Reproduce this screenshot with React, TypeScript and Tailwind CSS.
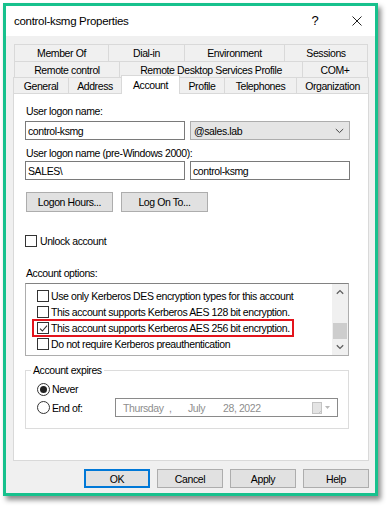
import React from "react";

type Tab = { label: string; w: string; last?: boolean; active?: boolean; noLeft?: boolean };

const backRow: Tab[] = [
  { label: "Member Of", w: "w-[94px]" },
  { label: "Dial-in", w: "w-[76px]" },
  { label: "Environment", w: "w-[100px]" },
  { label: "Sessions", w: "w-[84px]", last: true },
];

const midRow: Tab[] = [
  { label: "Remote control", w: "w-[105px]" },
  { label: "Remote Desktop Services Profile", w: "w-[183px]" },
  { label: "COM+", w: "w-[66px]", last: true },
];

const frontRow: Tab[] = [
  { label: "General", w: "w-[55px]" },
  { label: "Address", w: "w-[53px]" },
  { label: "Account", w: "w-[59px]", active: true },
  { label: "Profile", w: "w-[44px]", noLeft: true },
  { label: "Telephones", w: "w-[72px]" },
  { label: "Organization", w: "w-[73px]", last: true },
];

const options = [
  { text: "Use only Kerberos DES encryption types for this account", checked: false },
  { text: "This account supports Kerberos AES 128 bit encryption.", checked: false },
  { text: "This account supports Kerberos AES 256 bit encryption.", checked: true },
  { text: "Do not require Kerberos preauthentication", checked: false },
];

function Checkbox({ checked = false }: { checked?: boolean }) {
  return (
    <span className="flex h-[12px] w-[12px] shrink-0 items-center justify-center border border-[#333333] bg-white">
      {checked && (
        <svg width="9" height="9" viewBox="0 0 9 9">
          <path d="M1 4.6 L3.4 7 L8 1.6" fill="none" stroke="#333333" strokeWidth="1.1" />
        </svg>
      )}
    </span>
  );
}

function Radio({ on = false }: { on?: boolean }) {
  return (
    <span className="flex h-[13px] w-[13px] shrink-0 items-center justify-center rounded-full border border-[#333333] bg-white">
      {on && <span className="h-[7px] w-[7px] rounded-full bg-[#222222]" />}
    </span>
  );
}

function TabRow({ tabs, front = false }: { tabs: Tab[]; front?: boolean }) {
  return (
    <div className={front ? "ml-[7px] flex h-[16px] items-end" : "ml-[8px] flex"}>
      {tabs.map((t) => (
        <div
          key={t.label}
          className={[
            t.w,
            "flex items-center justify-center border-t border-[#d9d9d9] whitespace-nowrap",
            t.noLeft ? "" : "border-l",
            t.last || t.active ? "border-r" : "",
            t.active ? "relative z-10 -mb-px h-[19px] bg-white" : "h-[16px]",
          ].join(" ")}
        >
          {t.label}
        </div>
      ))}
    </div>
  );
}

function ChevronDown() {
  return (
    <svg width="9" height="6" viewBox="0 0 9 6">
      <path d="M0.8 1 L4.5 4.6 L8.2 1" fill="none" stroke="#444444" strokeWidth="1" />
    </svg>
  );
}

function ScrollBar() {
  return (
    <div className="flex w-[16px] flex-col bg-[#f0f0f0]">
      <div className="flex h-[17px] items-center justify-center">
        <svg width="8" height="6" viewBox="0 0 8 6">
          <path d="M0.8 4.8 L4 1.6 L7.2 4.8" fill="none" stroke="#5f5f5f" strokeWidth="1.3" />
        </svg>
      </div>
      <div className="flex-1">
        <div className="mx-[1px] mt-[22px] h-[16px] bg-[#cdcdcd]" />
      </div>
      <div className="flex h-[17px] items-center justify-center">
        <svg width="8" height="6" viewBox="0 0 8 6">
          <path d="M0.8 1.2 L4 4.4 L7.2 1.2" fill="none" stroke="#5f5f5f" strokeWidth="1.3" />
        </svg>
      </div>
    </div>
  );
}

export default function App() {
  return (
    <div className="h-[509px] w-[391px] bg-white pl-[3px] pt-[3px] font-['Liberation_Sans',Arial,sans-serif] text-[10.5px] leading-[14px] tracking-[-0.4px] text-black">
      <div className="flex h-[493px] w-[375px] flex-col border-[3px] border-[#17c18d] bg-[#f0f0f0] shadow-[3px_4px_5px_rgba(0,0,0,0.45)]">
        {/* title bar */}
        <div className="flex h-[30px] items-center bg-white pl-[8px] pr-[8px]">
          <span className="text-[11.5px] tracking-[-0.3px]">control-ksmg Properties</span>
          <span className="ml-auto flex w-[20px] justify-center text-[13px] tracking-normal">?</span>
          <span className="ml-[22px] flex w-[20px] justify-center">
            <svg width="10" height="10" viewBox="0 0 10 10">
              <path d="M0.5 0.5 L9.5 9.5 M9.5 0.5 L0.5 9.5" stroke="#222222" strokeWidth="1" />
            </svg>
          </span>
        </div>

        {/* tabs */}
        <div className="mt-[8px]">
          <div className="ml-[8px] flex h-[17px]">
            {backRow.map((t) => (
              <div
                key={t.label}
                className={`${t.w} flex items-center justify-center border-l border-t border-[#d9d9d9] ${t.last ? "border-r" : ""}`}
              >
                {t.label}
              </div>
            ))}
          </div>
          <TabRow tabs={midRow} />
          <TabRow tabs={frontRow} front />
        </div>

        {/* tab page */}
        <div className="ml-[7px] flex h-[368px] w-[356px] flex-col border border-[#d9d9d9] bg-white pl-[11px]">
          <div className="mt-[10px] h-[14px] pl-[1px]">User logon name:</div>
          <div className="mt-[3px] flex gap-[5px]">
            <div className="flex h-[19px] w-[160px] items-center border border-[#7a7a7a] bg-white pl-[2px]">control-ksmg</div>
            <div className="flex h-[19px] w-[160px] items-center justify-between border border-[#adadad] bg-[#e5e5e5] pl-[3px] pr-[5px]">
              <span>@sales.lab</span>
              <ChevronDown />
            </div>
          </div>

          <div className="mt-[6px] h-[14px] pl-[1px]">User logon name (pre-Windows 2000):</div>
          <div className="mt-[1px] flex gap-[5px]">
            <div className="flex h-[19px] w-[160px] items-center border border-[#7a7a7a] bg-white pl-[2px]">SALES\</div>
            <div className="flex h-[19px] w-[160px] items-center border border-[#7a7a7a] bg-white pl-[2px]">control-ksmg</div>
          </div>

          <div className="ml-[1px] mt-[12px] flex gap-[8px]">
            <div className="flex h-[20px] w-[87px] items-center justify-center border border-[#adadad] bg-[#e1e1e1]">Logon Hours...</div>
            <div className="flex h-[20px] w-[87px] items-center justify-center border border-[#adadad] bg-[#e1e1e1]">Log On To...</div>
          </div>

          <div className="mt-[22px] flex h-[14px] items-center gap-[3px]">
            <Checkbox />
            <span>Unlock account</span>
          </div>

          <div className="mt-[18px] h-[14px] pl-[1px]">Account options:</div>

          {/* account options list */}
          <div className="mt-[3px] flex h-[73px] w-[324px] border border-[#adadad] border-t-[#828282] bg-white">
            <div className="flex-1 pt-[4px]">
              {options.map((o) => (
                <div key={o.text} className="flex h-[16px] items-center pl-[6px]">
                  <div
                    className={`flex h-[18px] w-[262px] shrink-0 items-center gap-[2px] border-2 pl-[3px] ${
                      o.checked ? "border-[#e3141c]" : "border-transparent"
                    }`}
                  >
                    <Checkbox checked={o.checked} />
                    <span className="whitespace-nowrap">{o.text}</span>
                  </div>
                </div>
              ))}
            </div>
            <ScrollBar />
          </div>

          {/* account expires */}
          <fieldset className="mt-[7px] h-[66px] w-[324px] border border-[#dcdcdc]">
            <legend className="ml-[5px] px-[2px]">Account expires</legend>
            <div className="mt-[5px] flex h-[14px] items-center gap-[2px] pl-[11px]">
              <Radio on />
              <span>Never</span>
            </div>
            <div className="mt-[2px] flex h-[19px] items-center pl-[11px]">
              <div className="flex w-[78px] items-center gap-[2px]">
                <Radio />
                <span>End of:</span>
              </div>
              <div className="flex h-[19px] w-[223px] items-center border border-[#8a8a8a] bg-white pl-[7px] pr-[6px] text-[#8e8e8e]">
                <span className="w-[46px]">Thursday</span>
                <span className="w-[19px]">,</span>
                <span className="w-[35px]">July</span>
                <span>28, 2022</span>
                <svg className="ml-auto" width="19" height="12" viewBox="0 0 19 12">
                  <rect x="0.5" y="0.5" width="9" height="11" fill="#e4e4e4" stroke="#c4c4c4" />
                  <path d="M6.5 11.5 L9.5 8.5" stroke="#c4c4c4" />
                  <path d="M13 4 L18 4 L15.5 7 Z" fill="#b8b8b8" />
                </svg>
              </div>
            </div>
          </fieldset>
        </div>

        {/* dialog buttons */}
        <div className="mt-[8px] flex justify-end gap-[7px] pr-[6px]">
          <div className="flex h-[19px] w-[66px] items-center justify-center border-2 border-[#0078d7] bg-[#e1e1e1]">OK</div>
          <div className="flex h-[19px] w-[66px] items-center justify-center border border-[#adadad] bg-[#e1e1e1]">Cancel</div>
          <div className="flex h-[19px] w-[66px] items-center justify-center border border-[#adadad] bg-[#e1e1e1]">Apply</div>
          <div className="flex h-[19px] w-[66px] items-center justify-center border border-[#adadad] bg-[#e1e1e1]">Help</div>
        </div>
      </div>
    </div>
  );
}
